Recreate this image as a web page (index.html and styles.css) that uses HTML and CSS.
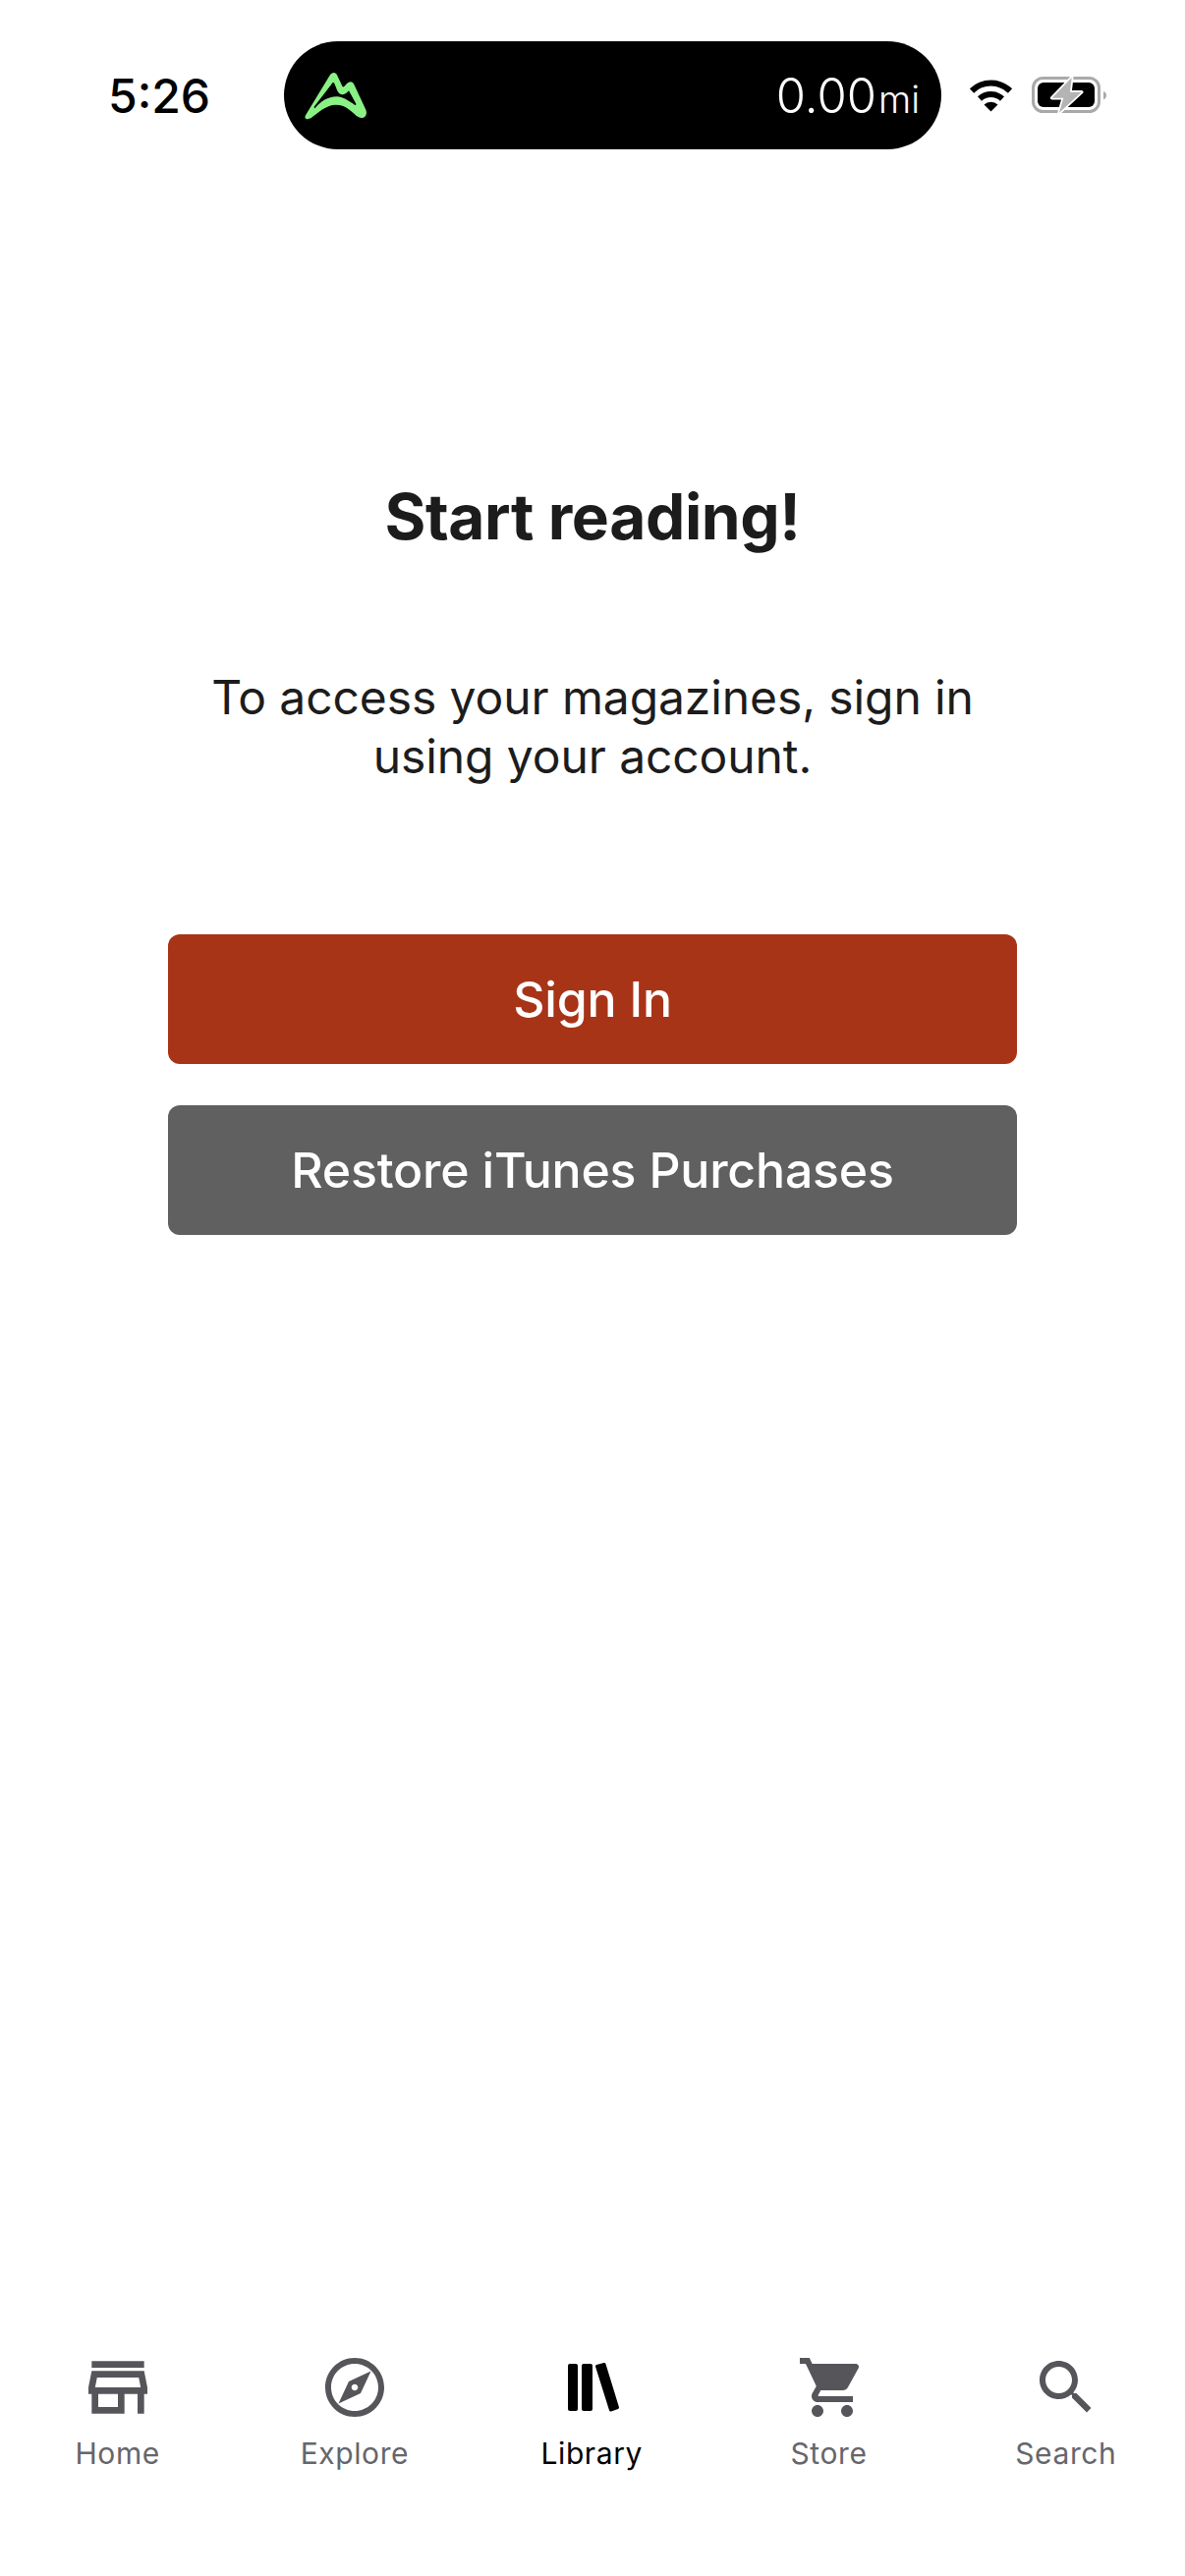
FILE: index.html
```html
<!DOCTYPE html>
<html lang="en">
<head>
    <meta charset="UTF-8">
    <meta name="viewport" content="width=device-width, initial-scale=1.0">
    <title>Library</title>
    <link rel="stylesheet" href="styles.css">
</head>
<body>
    <div class="app">
        <div class="status-bar">
            <span class="time">5:26</span>
            <div class="island">
                <svg class="island-logo" viewBox="0 0 255 195">
                    <path fill="#8af285" fill-rule="evenodd" d="M34 155 L105 38 C112 26 124 22 130 36 L145 68 C150 76 155 60 165 56 C172 52 178 56 181 63 L217 140 C224 158 210 170 195 163 C175 150 160 125 125 125 C95 125 70 150 50 165 C38 172 26 168 34 155 Z M62 135 C80 115 100 100 128 100 C150 100 170 118 183 125 C187 127 188 125 186 120 L165 82 C160 88 150 98 140 92 C130 88 128 76 122 62 C120 56 116 55 112 62 L60 130 C58 134 60 137 62 135 Z"/>
                </svg>
                <span class="distance">0.00<span class="unit">mi</span></span>
            </div>
            <svg class="wifi" viewBox="0 0 46 33">
                <path class="wifi-arc" d="M3.5 11.5 A28 28 0 0 1 42.5 11.5"/>
                <path class="wifi-arc" d="M11.5 19.5 A17 17 0 0 1 34.5 19.5"/>
                <path d="M23 32.5 L16 25.5 A10 10 0 0 1 30 25.5 Z"/>
            </svg>
            <svg class="battery" viewBox="0 0 77 38">
                <rect x="1.5" y="1.5" width="67" height="34" rx="10" fill="none" stroke="#a9a9a9" stroke-width="3"/>
                <rect x="6" y="6" width="58" height="25" rx="6"/>
                <path d="M73 15 C75.500 16 76 17.500 76 19 C76 20.500 75.500 22 73 23.500 Z" fill="#a9a9a9"/>
                <path d="M40.700 1 L20.700 21.700 L32.300 21.700 L28 36.700 L50.700 15.700 L39 15.700 Z" fill="#b4b4b4" stroke="#fff" stroke-width="3.500" stroke-linejoin="round" paint-order="stroke"/>
            </svg>
        </div>

        <div class="content">
            <h1 class="title">Start reading!</h1>
            <p class="intro">To access your magazines, sign in<br>using your account.</p>
            <button class="btn btn-signin">Sign In</button>
            <button class="btn btn-restore">Restore iTunes Purchases</button>
        </div>

        <nav class="tab-bar">
            <div class="tab">
                <svg class="tab-icon" viewBox="0 0 24 24"><path d="M18.36 9l.6 3H5.04l.6-3h12.72M20 4H4v2h16V4zm0 3H4l-1 5v2h1v6h10v-6h4v6h2v-6h1v-2l-1-5zM6 18v-4h6v4H6z"/></svg>
                <span>Home</span>
            </div>
            <div class="tab">
                <svg class="tab-icon" viewBox="-1.330 -1.330 26.660 26.660"><path d="M12 2C6.480 2 2 6.480 2 12s4.480 10 10 10 10-4.480 10-10S17.520 2 12 2zm0 18c-4.410 0-8-3.590-8-8s3.590-8 8-8 8 3.590 8 8-3.590 8-8 8zm-5.500-2.500l7.510-3.490L17.500 6.500 9.990 9.990 6.500 17.500zm5.500-6.600c.61 0 1.100.49 1.100 1.100s-.49 1.100-1.100 1.100-1.100-.49-1.100-1.100.49-1.100 1.100-1.100z"/></svg>
                <span>Explore</span>
            </div>
            <div class="tab active">
                <svg class="tab-icon" viewBox="0 0 80 80">
                    <rect x="16" y="16" width="10" height="48" rx="2"/>
                    <rect x="30" y="16" width="11" height="48" rx="2"/>
                    <path d="M45.500 18.500 L53 16.500 L66.500 60.500 L59.500 63 Z" stroke="#000" stroke-width="3" stroke-linejoin="round"/>
                </svg>
                <span>Library</span>
            </div>
            <div class="tab">
                <svg class="tab-icon" viewBox="-2.330 -1.330 26.660 26.660"><path d="M7 18c-1.100 0-1.990.9-1.990 2S5.900 22 7 22s2-.9 2-2-.9-2-2-2zM1 2v2h2l3.600 7.590-1.350 2.450c-.16.28-.25.61-.25.96 0 1.100.9 2 2 2h12v-2H7.420c-.14 0-.25-.11-.25-.25l.03-.12.9-1.630h7.450c.75 0 1.410-.41 1.750-1.030l3.580-6.490c.08-.14.12-.31.12-.48 0-.55-.45-1-1-1H5.210l-.94-2H1zm16 16c-1.100 0-1.990.9-1.990 2s.89 2 1.990 2 2-.9 2-2-.9-2-2-2z"/></svg>
                <span>Store</span>
            </div>
            <div class="tab">
                <svg class="tab-icon" viewBox="-1.330 -1.330 26.660 26.660"><path d="M15.500 14h-.79l-.28-.27C15.410 12.590 16 11.110 16 9.500 16 5.910 13.090 3 9.500 3S3 5.910 3 9.500 5.910 16 9.500 16c1.610 0 3.090-.59 4.230-1.570l.27.28v.79l5 4.990L20.490 19l-4.990-5zm-6 0C7.010 14 5 11.990 5 9.500S7.010 5 9.500 5 14 7.010 14 9.500 11.990 14 9.500 14z"/></svg>
                <span>Search</span>
            </div>
        </nav>
    </div>
</body>
</html>
```

FILE: styles.css
```css
body {
    margin: 0;
    background-color: #fff;
    font-family: Inter, "Liberation Sans", sans-serif;
}
.app {
    display: flex;
    flex-direction: column;
    height: 2622px;
    overflow: hidden;
}
.status-bar {
    display: flex;
    align-items: center;
    height: 110px;
    padding: 42px 0 0 110px;
}
.time {
    width: 179px;
    font-size: 48px;
    font-weight: 500;
    color: #000;
}
.island {
    display: flex;
    align-items: center;
    justify-content: space-between;
    box-sizing: border-box;
    width: 669px;
    height: 110px;
    padding: 0 22px 0 11px;
    border-radius: 55px;
    background-color: #000;
}
.island-logo {
    width: 85px;
    height: 65px;
}
.distance {
    font-size: 49px;
    font-weight: 300;
    color: #fff;
}
.unit {
    font-size: 38px;
    margin-left: 2px;
}
.wifi {
    width: 47px;
    height: 33px;
    margin-left: 27px;
}
.wifi-arc {
    fill: none;
    stroke: #000;
    stroke-width: 6;
}
.battery {
    width: 77px;
    height: 38px;
    margin-left: 18px;
}
.content {
    flex: 1;
    display: flex;
    flex-direction: column;
    align-items: center;
}
.title {
    margin: 336px 0 0;
    font-size: 64px;
    line-height: 76px;
    font-weight: 700;
    letter-spacing: -0.4px;
    color: #1c1c1c;
}
.intro {
    margin: 116px 0 0;
    font-size: 48px;
    line-height: 60px;
    letter-spacing: -0.1px;
    text-align: center;
    color: #1c1c1c;
}
.btn {
    width: 864px;
    height: 132px;
    border: none;
    border-radius: 12px;
    font-family: inherit;
    font-size: 50px;
    font-weight: 500;
    letter-spacing: -0.2px;
    color: #fff;
}
.btn-signin {
    margin-top: 151px;
    background-color: #a83418;
}
.btn-restore {
    margin-top: 42px;
    background-color: #606060;
}
.tab-bar {
    display: grid;
    grid-template-columns: repeat(5, 241.3px);
    height: 232px;
    margin-left: -1px;
}
.tab {
    display: flex;
    flex-direction: column;
    align-items: center;
    font-size: 30px;
    letter-spacing: 0.6px;
    color: #66666b;
}
.tab-icon {
    width: 80px;
    height: 80px;
    margin-bottom: 9px;
    fill: #55555a;
}
.tab.active {
    color: #000;
}
.tab.active .tab-icon {
    fill: #000;
}
```
